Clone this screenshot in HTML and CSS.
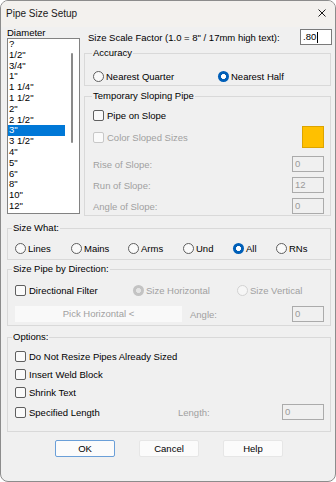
FILE: index.html
```html
<!DOCTYPE html>
<html lang="en">
<head>
  <meta charset="UTF-8">
  <title>Pipe Size Setup</title>
  <link rel="stylesheet" href="styles.css">
</head>
<body>
  <div class="window">
    <div class="titlebar">
      <span class="title">Pipe Size Setup</span>
      <svg class="close" width="8" height="8" viewBox="0 0 8 8"><path d="M0.5 0.5 L7.5 7.5 M7.5 0.5 L0.5 7.5" stroke="#1a1a1a" stroke-width="1" fill="none"/></svg>
    </div>

    <div class="content">
      <div class="main">
        <div class="left">
          <div class="caption">Diameter</div>
          <div class="listbox">
            <ul class="items">
              <li>?</li>
              <li>1/2"</li>
              <li>3/4"</li>
              <li>1"</li>
              <li>1 1/4"</li>
              <li>1 1/2"</li>
              <li>2"</li>
              <li>2 1/2"</li>
              <li class="sel">3"</li>
              <li>3 1/2"</li>
              <li>4"</li>
              <li>5"</li>
              <li>6"</li>
              <li>8"</li>
              <li>10"</li>
              <li>12"</li>
            </ul>
            <div class="scroll"><div class="thumb"></div></div>
          </div>
        </div>

        <div class="right">
          <div class="scale-row">
            <span>Size Scale Factor (1.0 = 8" / 17mm high text):</span>
            <div class="edit">.80<span class="caret"></span></div>
          </div>

          <fieldset class="group accuracy">
            <legend>Accuracy</legend>
            <div class="acc-row">
              <span class="opt"><span class="rb"></span>Nearest Quarter</span>
              <span class="opt"><span class="rb on"></span>Nearest Half</span>
            </div>
          </fieldset>

          <fieldset class="group sloping">
            <legend>Temporary Sloping Pipe</legend>
            <div class="line">
              <span class="opt"><span class="cb"></span>Pipe on Slope</span>
            </div>
            <div class="line color-line">
              <span class="opt off"><span class="cb"></span>Color Sloped Sizes</span>
              <span class="swatch"></span>
            </div>
            <div class="line field-line first">
              <span class="off">Rise of Slope:</span>
              <div class="edit dis">0</div>
            </div>
            <div class="line field-line">
              <span class="off">Run of Slope:</span>
              <div class="edit dis">12</div>
            </div>
            <div class="line field-line">
              <span class="off">Angle of Slope:</span>
              <div class="edit dis">0</div>
            </div>
          </fieldset>
        </div>
      </div>

      <fieldset class="group wide size-what">
        <legend>Size What:</legend>
        <div class="what-row">
          <span class="opt"><span class="rb"></span>Lines</span>
          <span class="opt"><span class="rb"></span>Mains</span>
          <span class="opt"><span class="rb"></span>Arms</span>
          <span class="opt"><span class="rb"></span>Und</span>
          <span class="opt"><span class="rb on"></span>All</span>
          <span class="opt"><span class="rb"></span>RNs</span>
        </div>
      </fieldset>

      <fieldset class="group wide direction">
        <legend>Size Pipe by Direction:</legend>
        <div class="dir-row">
          <span class="opt"><span class="cb"></span>Directional Filter</span>
          <span class="opt off"><span class="rb dis-on"></span>Size Horizontal</span>
          <span class="opt off"><span class="rb dis"></span>Size Vertical</span>
        </div>
        <div class="pick-row">
          <div class="pick">Pick Horizontal &lt;</div>
          <span class="off angle">Angle:</span>
          <div class="edit dis">0</div>
        </div>
      </fieldset>

      <fieldset class="group wide options">
        <legend>Options:</legend>
        <div class="opt-line"><span class="opt"><span class="cb"></span>Do Not Resize Pipes Already Sized</span></div>
        <div class="opt-line"><span class="opt"><span class="cb"></span>Insert Weld Block</span></div>
        <div class="opt-line"><span class="opt"><span class="cb"></span>Shrink Text</span></div>
        <div class="opt-line length-line">
          <span class="opt"><span class="cb"></span>Specified Length</span>
          <span class="off">Length:</span>
          <div class="edit dis">0</div>
        </div>
      </fieldset>

      <div class="buttons">
        <button type="button" class="btn default">OK</button>
        <button type="button" class="btn">Cancel</button>
        <button type="button" class="btn">Help</button>
      </div>
    </div>
  </div>
</body>
</html>
```

FILE: styles.css
```css
body {
  margin: 0;
  background: #ffffff;
  font-family: "Liberation Sans", Arial, sans-serif;
  font-size: 9.5px;
  color: #000;
}
.window {
  width: 334px;
  height: 480px;
  border: 1px solid #8c8c8c;
  border-radius: 8px;
  background: #f0f0f0;
  overflow: hidden;
}
.titlebar {
  height: 26px;
  box-sizing: border-box;
  padding: 0 9px 2px 5px;
  background: #f3f1ee;
  display: flex;
  align-items: center;
  justify-content: space-between;
}
.title {
  font-size: 10px;
  color: #1a1a1a;
}
.content {
  padding: 0 4px 0 6px;
}
.main {
  display: grid;
  grid-template-columns: 73px 1fr;
  column-gap: 4px;
  align-items: start;
}
.caption {
  line-height: 10px;
  padding-top: 1px;
}
.listbox {
  height: 176px;
  box-sizing: border-box;
  border: 1px solid #828282;
  background: #fff;
  display: flex;
}
.items {
  list-style: none;
  margin: 0;
  padding: 0;
  width: 57px;
}
.items li {
  line-height: 10.8px;
  height: 10.8px;
  padding-left: 1px;
  white-space: nowrap;
}
.items li.sel {
  background: #0078d7;
  color: #fff;
}
.scroll {
  width: 14px;
  padding-top: 14px;
  display: flex;
  justify-content: center;
}
.thumb {
  width: 2px;
  height: 90px;
  background: #8a8a8a;
  border-radius: 1px;
}

.scale-row {
  height: 16px;
  margin-top: 2px;
  margin-right: -1px;
  padding-left: 4px;
  display: flex;
  align-items: center;
  justify-content: space-between;
}
.edit {
  width: 32px;
  height: 16px;
  box-sizing: border-box;
  border: 1px solid #7a7a7a;
  background: #fff;
  padding-left: 2px;
  line-height: 14px;
  display: flex;
  align-items: center;
}
.caret {
  width: 1px;
  height: 11px;
  background: #000;
  margin-left: 1px;
}
.edit.dis {
  border-color: #ababab;
  background: #f0f0f0;
  color: #9a9a9a;
}

.group {
  margin: 0;
  border: 1px solid #d9d9d9;
  padding: 0 6px 0 8px;
  min-width: 0;
}
.group legend {
  padding: 0 1px;
  margin-left: -1px;
  line-height: 10px;
}
.group.wide {
  padding-left: 7px;
}
.group.wide legend {
  margin-left: -3px;
}

.accuracy {
  margin-top: 3px;
  padding-top: 12px;
  padding-bottom: 3px;
}
.acc-row {
  display: grid;
  grid-template-columns: 125px auto;
  height: 12px;
  align-items: center;
}
.sloping {
  margin-top: 5px;
  padding-top: 8px;
  padding-bottom: 1px;
}
.line {
  height: 12px;
  display: flex;
  align-items: center;
  justify-content: space-between;
}
.color-line {
  height: 22px;
  margin-top: 5px;
}
.field-line {
  height: 16px;
  margin-top: 5px;
}
.field-line.first {
  margin-top: 8px;
}
.swatch {
  width: 22px;
  height: 22px;
  box-sizing: border-box;
  background: #ffc000;
  border: 1px solid #dca400;
}

.opt {
  display: inline-flex;
  align-items: center;
  white-space: nowrap;
}
.off {
  color: #a0a0a0;
}
.cb {
  width: 11px;
  height: 11px;
  box-sizing: border-box;
  border: 1px solid #5f5f5f;
  border-radius: 2px;
  background: #fafafa;
  margin-right: 3px;
}
.off .cb {
  border-color: #c8c8c8;
}
.rb {
  width: 11px;
  height: 11px;
  box-sizing: border-box;
  border: 1px solid #5f5f5f;
  border-radius: 50%;
  background: #fafafa;
  margin-right: 2px;
}
.rb.on {
  border: none;
  background: radial-gradient(circle, #fff 0 2.2px, #005fb8 2.8px);
}
.rb.dis-on {
  border: none;
  background: radial-gradient(circle, #e4e4e4 0 2.2px, #c3c3c3 2.8px);
}
.rb.dis {
  border-color: #d2d2d2;
  background: #f6f6f6;
}

.size-what {
  margin-top: 7px;
  padding-top: 9px;
  padding-bottom: 5px;
}
.what-row {
  display: grid;
  grid-template-columns: 56px 57px 55px 50px 43px auto;
  height: 12px;
  align-items: center;
}
.direction {
  margin-top: 4px;
  padding-top: 10px;
  padding-bottom: 3px;
}
.dir-row {
  display: grid;
  grid-template-columns: 118px 104px auto;
  height: 12px;
  align-items: center;
}
.pick-row {
  display: grid;
  grid-template-columns: 167px 1fr 32px;
  column-gap: 8px;
  height: 16px;
  margin-top: 10px;
  align-items: center;
}
.pick {
  height: 16px;
  line-height: 16px;
  text-align: center;
  background: #f9f9f9;
  color: #a0a0a0;
}
.options {
  margin-top: 6px;
  padding-top: 2px;
  padding-bottom: 11px;
}
.opt-line {
  height: 12px;
  margin-top: 6px;
  display: flex;
  align-items: center;
}
.length-line {
  display: grid;
  grid-template-columns: 163px 1fr 42px;
  height: 16px;
}
.length-line .edit {
  width: 42px;
}

.buttons {
  display: flex;
  gap: 24px;
  padding-left: 48px;
  margin-top: 8px;
}
.btn {
  width: 60px;
  height: 17px;
  padding: 0;
  font-family: inherit;
  font-size: 9.5px;
  color: #000;
  background: #fbfbfb;
  border: 1px solid #e6e6e6;
  border-radius: 2px;
}
.btn.default {
  border-color: #6a9fd8;
}
```
